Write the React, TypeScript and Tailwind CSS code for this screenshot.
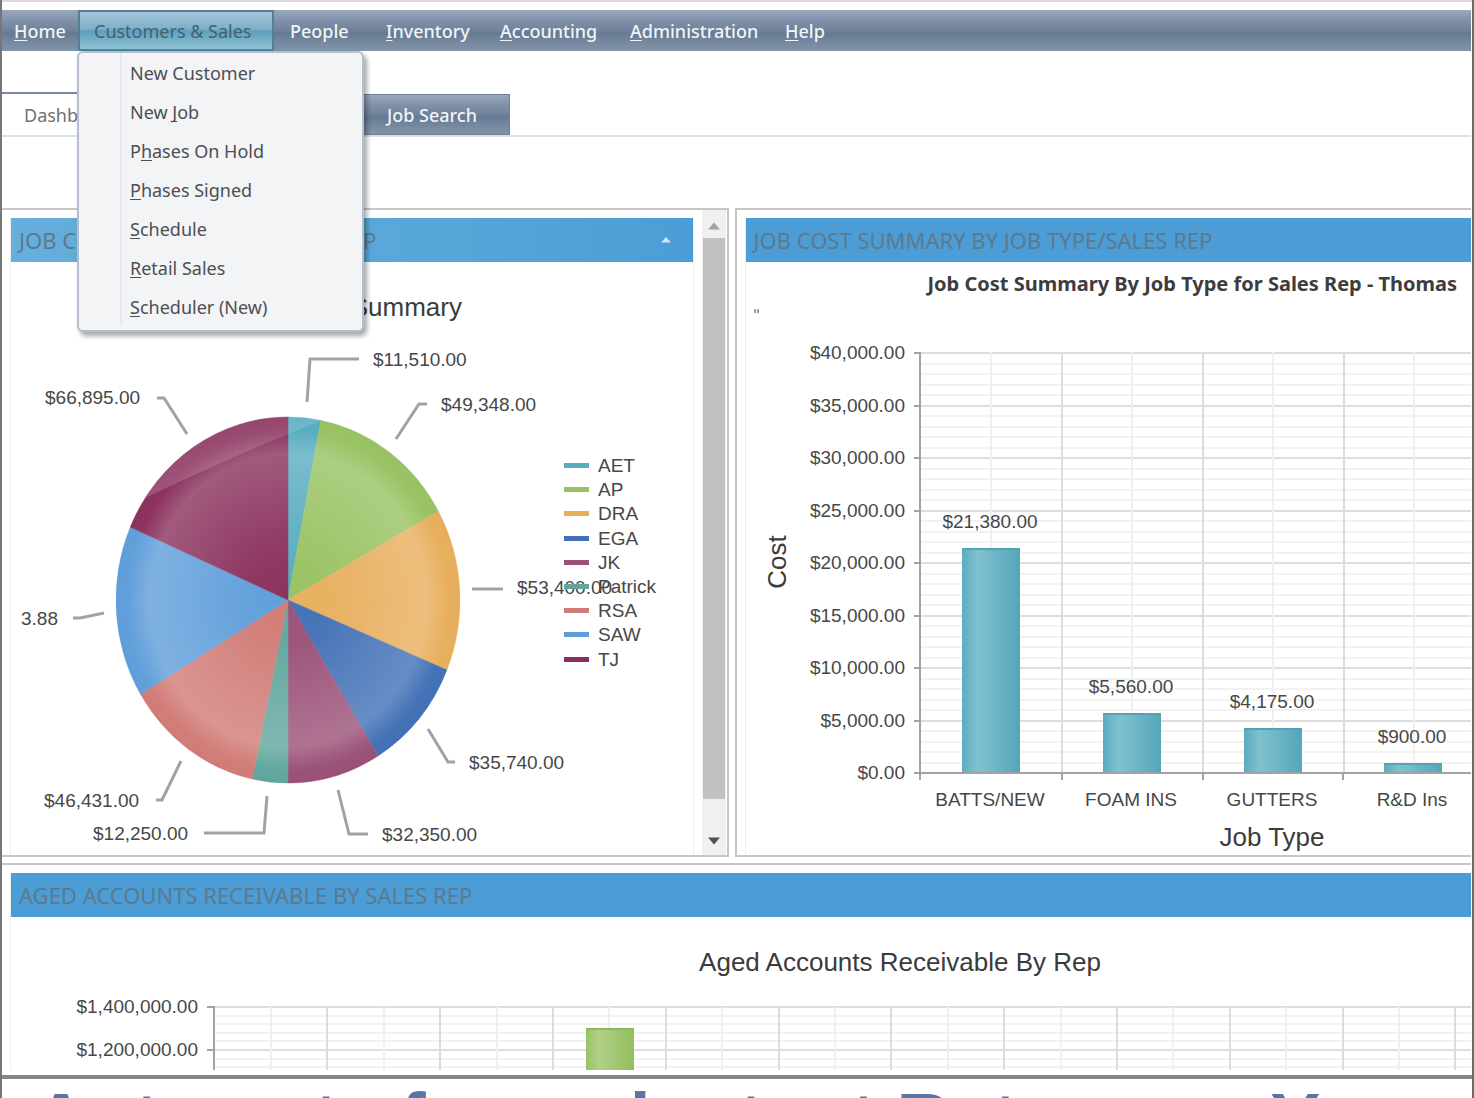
import React from "react";

const UI_FONT = "font-['Noto_Sans','Open_Sans',sans-serif]";

/* "_" marks the access key: the letter after it is underlined. */
function Mnemonic({ text }: { text: string }) {
  const at = text.indexOf("_");
  if (at < 0) return <span>{text}</span>;
  return (
    <span>
      {text.slice(0, at)}
      <span className="underline underline-offset-2 [text-decoration-skip-ink:none]">{text[at + 1]}</span>
      {text.slice(at + 2)}
    </span>
  );
}

const MENU = [
  { text: "_Home", box: "w-[76px] pl-3" },
  { text: "Customers & Sales", box: "w-[196px] pl-3.5", open: true },
  { text: "People", box: "w-24 pl-4" },
  { text: "_Inventory", box: "w-[114px] pl-4" },
  { text: "_Accounting", box: "w-[130px] pl-4" },
  { text: "_Administration", box: "w-[155px] pl-4" },
  { text: "_Help", box: "w-20 pl-4" },
];

const SUBMENU = [
  "New Customer",
  "New _Job",
  "P_hases On Hold",
  "_Phases Signed",
  "_Schedule",
  "_Retail Sales",
  "_Scheduler (New)",
];

const STEEL =
  "bg-[linear-gradient(to_bottom,#99a8bb_0%,#7f8fa8_28%,#70829b_50%,#647a93_56%,#7789a0_80%,#8294a8_100%)]";

function MenuBar() {
  return (
    <nav className={`h-[41px] ${STEEL}`}>
      <ul className="flex h-full text-lg text-white">
        {MENU.map((m) => (
          <li key={m.text} className="relative h-full">
            <button
              className={
                m.open
                  ? `flex h-full items-center border-2 border-[#4f8093] bg-[linear-gradient(to_bottom,#a3c4d8_0%,#7fb0c8_45%,#5f9fbd_52%,#8fc3d3_100%)] text-[#44606f] ${m.box}`
                  : `flex h-full items-center font-medium text-[#f1f4f7] ${m.box}`
              }
            >
              <Mnemonic text={m.text} />
            </button>
            {m.open && (
              <div className="absolute top-full -left-px z-10 flex w-[287px] rounded-md border-2 border-[#b3bed0] bg-[#f2f4f6] pb-1 shadow-[3px_4px_5px_rgba(0,0,0,0.35)]">
                <div className="w-[43px] shrink-0 border-r-2 border-[#e6eaee]" />
                <ul className="flex-1">
                  {SUBMENU.map((s) => (
                    <li key={s}>
                      <button className="flex h-[39px] w-full items-center pl-2 text-[#4d4f53]">
                        <Mnemonic text={s} />
                      </button>
                    </li>
                  ))}
                </ul>
              </div>
            )}
          </li>
        ))}
      </ul>
    </nav>
  );
}

function Tabs() {
  return (
    <div className="mt-[41px] border-b-2 border-[#dbe1e7] text-lg">
      <div className="flex w-[508px] items-end justify-between">
        <button className="h-[43px] w-44 border-t-2 border-[#7a899b] bg-white pl-[22px] text-left text-[#6f7072]">
          Dashboard
        </button>
        <button
          className={`h-[41px] w-[150px] border border-[#6f8096] pl-[26px] text-left font-medium text-[#f1f4f7] ${STEEL}`}
        >
          Job Search
        </button>
      </div>
    </div>
  );
}

function PanelHeader({ title, tone, children }: { title: string; tone: string; children?: React.ReactNode }) {
  return (
    <div className={`flex h-11 shrink-0 items-center justify-between pl-2 ${tone}`}>
      <h2 className="text-[22px] whitespace-nowrap text-[#5b7a8d]">{title}</h2>
      {children}
    </div>
  );
}

/* ---------- Pie chart ---------- */

const CX = 288;
const CY = 600;
const RX = 172;
const RY = 183;

const SLICES = [
  { name: "AET", color: "#58acc1", from: 0, to: 11 },
  { name: "AP", color: "#98c262", from: 11, to: 61 },
  { name: "DRA", color: "#e8ae5c", from: 61, to: 112.5 },
  { name: "EGA", color: "#4170b6", from: 112.5, to: 148.5 },
  { name: "JK", color: "#9a5077", from: 148.5, to: 180 },
  { name: "Patrick", color: "#60a69d", from: 180, to: 192 },
  { name: "RSA", color: "#d17b76", from: 192, to: 239 },
  { name: "SAW", color: "#5f9eda", from: 239, to: 293.5 },
  { name: "TJ", color: "#8a305c", from: 293.5, to: 360 },
];

function rim(deg: number) {
  const a = (deg * Math.PI) / 180;
  return `${(CX + RX * Math.sin(a)).toFixed(1)} ${(CY - RY * Math.cos(a)).toFixed(1)}`;
}

const CALLOUTS = [
  { text: "$11,510.00", x: 373, y: 366, line: "307,402 310,359 359,359" },
  { text: "$49,348.00", x: 441, y: 411, line: "396,439 419,404 427,404" },
  { text: "$53,400.00", x: 517, y: 594, line: "472,589 503,589" },
  { text: "$35,740.00", x: 469, y: 769, line: "428,729 448,762 455,762" },
  { text: "$32,350.00", x: 382, y: 841, line: "338,790 349,834 368,834" },
  { text: "$12,250.00", x: 93, y: 840, line: "267,796 264,833 204,833" },
  { text: "$46,431.00", x: 44, y: 807, line: "181,761 162,800 156,800" },
  { text: "3.88", x: 21, y: 625, line: "104,613 80,618 73,618" },
  { text: "$66,895.00", x: 45, y: 404, line: "187,434 164,398 157,398" },
];

function PieChart() {
  return (
    <svg
      width="680"
      height="593"
      viewBox="11 262 680 593"
      className="block font-['Liberation_Sans',Arial,sans-serif]"
      role="img"
      aria-label="Job cost summary by sales rep"
    >
      <defs>
        <radialGradient id="pie-sheen">
          <stop offset="0" stopColor="#fff" stopOpacity="0.02" />
          <stop offset="0.25" stopColor="#fff" stopOpacity="0.04" />
          <stop offset="0.8" stopColor="#fff" stopOpacity="0.2" />
          <stop offset="0.93" stopColor="#fff" stopOpacity="0.02" />
          <stop offset="1" stopColor="#fff" stopOpacity="0" />
        </radialGradient>
        <linearGradient id="pie-gloss" x1="0" y1="0" x2="0.35" y2="1">
          <stop offset="0" stopColor="#fff" stopOpacity="0.08" />
          <stop offset="1" stopColor="#fff" stopOpacity="0.18" />
        </linearGradient>
      </defs>
      <text x="462" y="316" fontSize="26" textAnchor="end" fill="#3b3b3b">
        Job Cost Summary
      </text>
      {SLICES.map((s) => (
        <path
          key={s.name}
          d={`M${CX} ${CY}L${rim(s.from)}A${RX} ${RY} 0 0 1 ${rim(s.to)}Z`}
          fill={s.color}
          stroke={s.color}
          strokeWidth="0.5"
        />
      ))}
      <ellipse cx={CX} cy={CY} rx={RX} ry={RY} fill="url(#pie-sheen)" />
      <path d={`M${rim(304)}A${RX} ${RY} 0 0 1 ${rim(371)}Q235 455 ${rim(304)}Z`} fill="url(#pie-gloss)" />
      <g fill="none" stroke="#a2a2a2" strokeWidth="3">
        {CALLOUTS.map((c) => (
          <polyline key={c.text} points={c.line} />
        ))}
      </g>
      <g fontSize="19" fill="#474747">
        {CALLOUTS.map((c) => (
          <text key={c.text} x={c.x} y={c.y}>
            {c.text}
          </text>
        ))}
        {SLICES.map((s, i) => (
          <g key={s.name}>
            <rect x="564" y={463 + Math.round(i * 24.2)} width="25" height="5" fill={s.color} />
            <text x="598" y={472 + Math.round(i * 24.2)}>
              {s.name}
            </text>
          </g>
        ))}
      </g>
    </svg>
  );
}

/* ---------- Job type bar chart ---------- */

const JOBS = [
  { name: "BATTS/NEW", value: "$21,380.00", x: 991, top: 548 },
  { name: "FOAM INS", value: "$5,560.00", x: 1132, top: 713 },
  { name: "GUTTERS", value: "$4,175.00", x: 1273, top: 728 },
  { name: "R&D Ins", value: "$900.00", x: 1413, top: 763 },
];

const COSTS = [
  "$40,000.00",
  "$35,000.00",
  "$30,000.00",
  "$25,000.00",
  "$20,000.00",
  "$15,000.00",
  "$10,000.00",
  "$5,000.00",
  "$0.00",
];

function JobTypeChart() {
  return (
    <svg
      width="900"
      height="553"
      viewBox="746 302 900 553"
      className="block font-['Liberation_Sans',Arial,sans-serif]"
      role="img"
      aria-label="Cost by job type"
    >
      <defs>
        <linearGradient id="bar-teal">
          <stop offset="0" stopColor="#5aacc0" />
          <stop offset="0.27" stopColor="#80c1d0" />
          <stop offset="1" stopColor="#54a6bb" />
        </linearGradient>
      </defs>
      <g fill="#9aa0a4">
        <rect x="754" y="309" width="2" height="4" />
        <rect x="757" y="309" width="2" height="4" />
      </g>
      <g strokeWidth="2">
        {Array.from({ length: 40 }, (_, i) => (
          <line key={i} x1="921" x2="1640" y1={353 + Math.round(i * 10.5)} y2={353 + Math.round(i * 10.5)} stroke={i % 5 ? "#f2f2f2" : "#dedede"} />
        ))}
        {Array.from({ length: 10 }, (_, i) => (
          <line key={i} x1={991 + Math.round(i * 70.5)} x2={991 + Math.round(i * 70.5)} y1="352" y2="772" stroke={i % 2 ? "#dcdcdc" : "#f0f0f0"} />
        ))}
      </g>
      <g stroke="#a3a3a3" strokeWidth="2">
        <line x1="920" x2="920" y1="352" y2="780" />
        <line x1="914" x2="1640" y1="773" y2="773" />
        {COSTS.map((c, i) => (
          <line key={c} x1="914" x2="920" y1={353 + Math.round(i * 52.5)} y2={353 + Math.round(i * 52.5)} />
        ))}
        {[1062, 1203, 1343].map((x) => (
          <line key={x} x1={x} x2={x} y1="773" y2="780" />
        ))}
      </g>
      {JOBS.map((j) => (
        <g key={j.name}>
          <rect x={j.x - 29} y={j.top} width="58" height={772 - j.top} fill="url(#bar-teal)" />
          <rect x={j.x - 29} y={j.top} width="58" height="2" fill="#54a2b5" />
        </g>
      ))}
      <g fontSize="19" fill="#474747" textAnchor="end">
        {COSTS.map((c, i) => (
          <text key={c} x="905" y={359 + Math.round(i * 52.5)}>
            {c}
          </text>
        ))}
      </g>
      <g fontSize="19" fill="#474747" textAnchor="middle">
        {JOBS.map((j) => (
          <g key={j.name}>
            <text x={j.x - 1} y={j.top - 20}>
              {j.value}
            </text>
            <text x={j.x - 1} y="806">
              {j.name}
            </text>
          </g>
        ))}
      </g>
      <g fontSize="26" fill="#3b3b3b" textAnchor="middle">
        <text x="1272" y="846">
          Job Type
        </text>
        <text transform="translate(786 562) rotate(-90)">Cost</text>
      </g>
    </svg>
  );
}

/* ---------- Receivables chart ---------- */

function ReceivablesChart() {
  return (
    <svg
      width="1600"
      height="153"
      viewBox="11 917 1600 153"
      className="block font-['Liberation_Sans',Arial,sans-serif]"
      role="img"
      aria-label="Aged accounts receivable by rep"
    >
      <defs>
        <linearGradient id="bar-green">
          <stop offset="0" stopColor="#98c262" />
          <stop offset="0.27" stopColor="#b1d088" />
          <stop offset="1" stopColor="#92bd5c" />
        </linearGradient>
      </defs>
      <text x="900" y="971" fontSize="26" textAnchor="middle" fill="#3b3b3b">
        Aged Accounts Receivable By Rep
      </text>
      <g strokeWidth="2">
        {Array.from({ length: 8 }, (_, i) => (
          <line key={i} x1="214" x2="1611" y1={1007 + Math.round(i * 8.6)} y2={1007 + Math.round(i * 8.6)} stroke={i % 5 ? "#f2f2f2" : "#dedede"} />
        ))}
        {Array.from({ length: 24 }, (_, i) => (
          <line key={i} x1={271 + Math.round(i * 56.4)} x2={271 + Math.round(i * 56.4)} y1="1007" y2="1070" stroke={i % 2 ? "#dcdcdc" : "#f0f0f0"} />
        ))}
      </g>
      <g stroke="#a3a3a3" strokeWidth="2">
        <line x1="214" x2="214" y1="1006" y2="1070" />
        <line x1="207" x2="214" y1="1007" y2="1007" />
        <line x1="207" x2="214" y1="1050" y2="1050" />
      </g>
      <rect x="586" y="1028" width="48" height="42" fill="url(#bar-green)" />
      <rect x="586" y="1028" width="48" height="2" fill="#8fb762" />
      <g fontSize="19" fill="#474747" textAnchor="end">
        <text x="198" y="1013">
          $1,400,000.00
        </text>
        <text x="198" y="1056">
          $1,200,000.00
        </text>
      </g>
    </svg>
  );
}

function ScrollBar() {
  return (
    <div className="mr-px flex w-6 shrink-0 flex-col items-center bg-[#f0f0f0]">
      <button aria-label="Scroll up" className="flex h-7 w-full shrink-0 items-center justify-center pt-1">
        <svg width="12" height="8" viewBox="0 0 12 8">
          <path d="M6 0.5L12 7.5H0Z" fill="#a3a3a3" />
        </svg>
      </button>
      <div className="w-[22px] flex-1 bg-[#c1c1c1]" />
      <button aria-label="Scroll down" className="flex h-14 w-full shrink-0 items-center justify-center pt-7">
        <svg width="12" height="8" viewBox="0 0 12 8">
          <path d="M0 0.5H12L6 7.5Z" fill="#505050" />
        </svg>
      </button>
    </div>
  );
}

export default function App() {
  return (
    <div className={`flex h-screen flex-col overflow-hidden border-r-2 border-l-2 border-r-[#6a6a6a] border-l-[#777] bg-white ${UI_FONT}`}>
      <div className="flex shrink-0 flex-col border-t-2 border-[#dadada] pt-2 pr-px">
        <MenuBar />
        <Tabs />

        <main className="mt-[71px] flex flex-col gap-1.5">
          <div className="grid grid-cols-[727fr_737fr] gap-1.5">
            <section className="flex min-w-0 overflow-hidden border-2 border-l-0 border-[#c6c6c6]">
              <div className="mx-2 mt-2 flex min-w-0 flex-1 flex-col overflow-hidden border-x border-[#efefef]">
                <PanelHeader
                  title="JOB COST SUMMARY BY SALES REP"
                  tone="bg-[linear-gradient(to_right,#66aedb,#58a7da_60%,#4c9dd6)]"
                >
                  <button aria-label="Collapse panel" className="mr-5 p-0.5">
                    <svg width="10" height="6" viewBox="0 0 10 6">
                      <path d="M5 0L10 5.5H0Z" fill="#d3e8f6" />
                    </svg>
                  </button>
                </PanelHeader>
                <PieChart />
              </div>
              <ScrollBar />
            </section>

            <section className="min-w-0 overflow-hidden border-2 border-r-0 border-[#c6c6c6]">
              <div className="mt-2 ml-2 border-l border-[#efefef]">
                <PanelHeader title="JOB COST SUMMARY BY JOB TYPE/SALES REP" tone="bg-[#4c9dd6]" />
                <h3 className="h-10 pt-2 pl-[182px] text-xl font-bold whitespace-nowrap text-[#3d3d3d]">
                  Job Cost Summary By Job Type for Sales Rep - Thomas
                </h3>
                <JobTypeChart />
              </div>
            </section>
          </div>

          <section className="overflow-hidden border-t-2 border-[#c6c6c6]">
            <div className="mt-2 ml-2 border-l border-[#efefef]">
              <PanelHeader title="AGED ACCOUNTS RECEIVABLE BY SALES REP" tone="bg-[#4c9dd6]" />
              <ReceivablesChart />
            </div>
          </section>
        </main>
      </div>

      <div className="mt-[5px] h-1 shrink-0 bg-[#868686]" />
      <p className="h-5 min-h-0 pl-8 font-['Liberation_Sans',Arial,sans-serif] text-[75px] leading-[80px] font-bold whitespace-nowrap text-[#5a74a8]">
        Automate for an instant Return on Your
      </p>
    </div>
  );
}
